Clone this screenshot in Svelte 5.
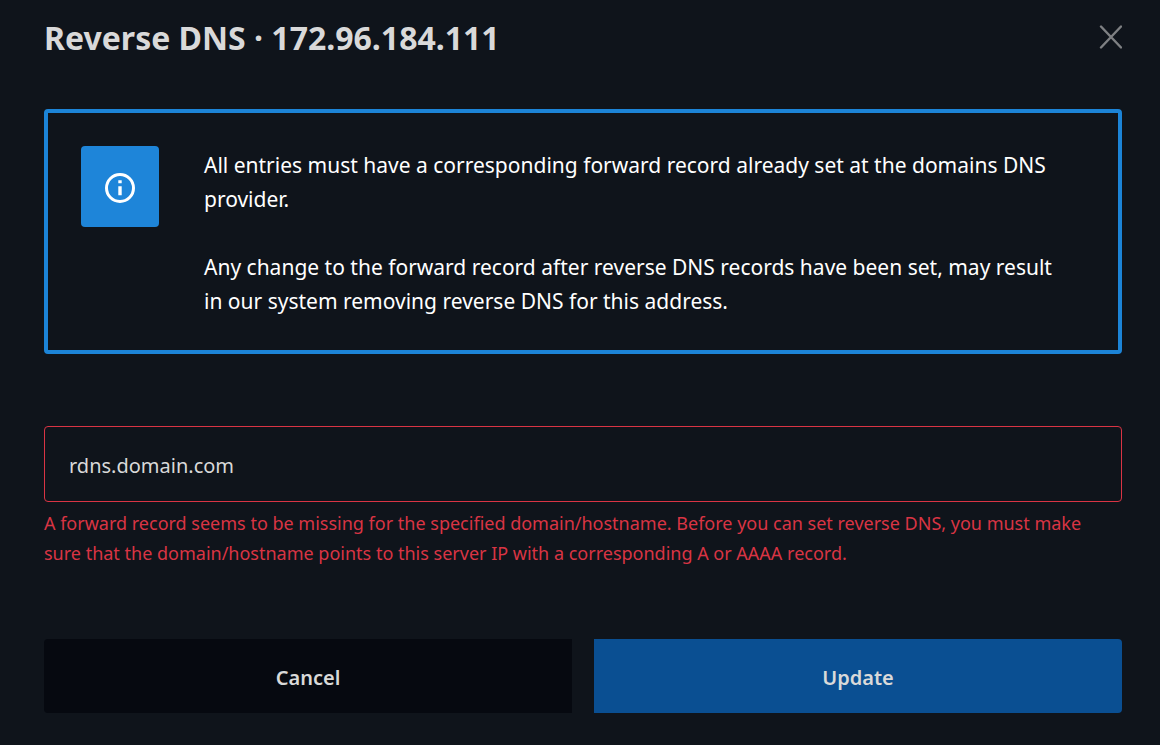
<script>
	let { address = '172.96.184.111', onClose, onUpdate } = $props();

	let hostname = $state('rdns.domain.com');

	const error =
		'A forward record seems to be missing for the specified domain/hostname. Before you can set reverse DNS, you must make sure that the domain/hostname points to this server IP with a corresponding A or AAAA record.';

	function submit(event) {
		event.preventDefault();
		onUpdate?.(hostname);
	}
</script>

<main class="modal">
	<header class="modal-header">
		<h1>Reverse DNS · {address}</h1>
		<button class="btn-close" type="button" aria-label="Close" onclick={() => onClose?.()}>
			<svg width="24" height="26" viewBox="0 0 24 26" aria-hidden="true">
				<path d="M3 1.5 23 22.5M23 1.5 3 22.5" />
			</svg>
		</button>
	</header>

	<section class="notice">
		<div class="notice-icon">
			<svg width="30" height="32" viewBox="0 0 30 32" aria-hidden="true">
				<circle cx="15" cy="17" r="13.5" />
				<path d="M13.3 9.3h3.4v3h-3.4zM13.3 15.3h3.4v9h-3.4z" />
			</svg>
		</div>
		<div class="notice-text">
			<p>All entries must have a corresponding forward record already set at the domains DNS provider.</p>
			<p>
				Any change to the forward record after reverse DNS records have been set, may result in our
				system removing reverse DNS for this address.
			</p>
		</div>
	</section>

	<form onsubmit={submit}>
		<input
			type="text"
			aria-label="Hostname"
			aria-invalid="true"
			aria-describedby="hostname-error"
			spellcheck="false"
			bind:value={hostname}
		/>
		<p class="error" id="hostname-error">{error}</p>

		<div class="actions">
			<button class="btn btn-cancel" type="button" onclick={() => onClose?.()}>Cancel</button>
			<button class="btn btn-update" type="submit">Update</button>
		</div>
	</form>
</main>

<style>
	:global(body) {
		margin: 0;
		background: #0f141b;
	}

	.modal {
		padding: 16px 38px 32px 44px;
		color: #d9d9d9;
		font-family: 'Segoe UI', 'Noto Sans', 'Open Sans', sans-serif;
	}

	.modal-header {
		display: flex;
		justify-content: space-between;
		align-items: center;
	}

	h1 {
		margin: 0;
		font-size: 32px;
		font-weight: 700;
		line-height: 44px;
	}

	.btn-close {
		display: flex;
		padding: 0;
		border: 0;
		background: none;
		cursor: pointer;
	}

	.btn-close path {
		fill: none;
		stroke: #7e8083;
		stroke-width: 2.4;
		stroke-linecap: round;
	}

	.notice {
		display: flex;
		align-items: flex-start;
		gap: 45px;
		margin-top: 49px;
		padding: 33px 48px 32px 33px;
		border: 4px solid #1c84d7;
		border-radius: 4px;
		color: #fff;
	}

	.notice-icon {
		display: flex;
		flex: none;
		align-items: center;
		justify-content: center;
		width: 78px;
		height: 81px;
		border-radius: 4px;
		background: #1e85d9;
	}

	.notice-icon circle {
		fill: none;
		stroke: #fff;
		stroke-width: 3;
	}

	.notice-icon path {
		fill: #fff;
	}

	.notice-text {
		display: flex;
		flex-direction: column;
		gap: 34px;
		padding-top: 2px;
		font-size: 21px;
		line-height: 34px;
	}

	p {
		margin: 0;
	}

	form {
		margin-top: 72px;
	}

	input {
		display: block;
		box-sizing: border-box;
		width: 100%;
		height: 76px;
		padding: 2px 24px 0;
		border: 1px solid #d93444;
		border-radius: 4px;
		background: transparent;
		color: inherit;
		font-family: inherit;
		font-size: 20px;
		outline: none;
	}

	.error {
		margin-top: 6px;
		color: #d93444;
		font-size: 18px;
		line-height: 30px;
	}

	.actions {
		display: grid;
		grid-template-columns: 1fr 1fr;
		gap: 22px;
		margin-top: 71px;
	}

	.btn {
		height: 74px;
		padding: 2px 16px 0;
		border: 0;
		color: inherit;
		font-family: inherit;
		font-size: 20px;
		font-weight: 600;
		cursor: pointer;
	}

	.btn-cancel {
		border-radius: 4px 0 0 4px;
		background: #060910;
	}

	.btn-update {
		border-radius: 0 4px 4px 0;
		background: #0a4f92;
	}
</style>
